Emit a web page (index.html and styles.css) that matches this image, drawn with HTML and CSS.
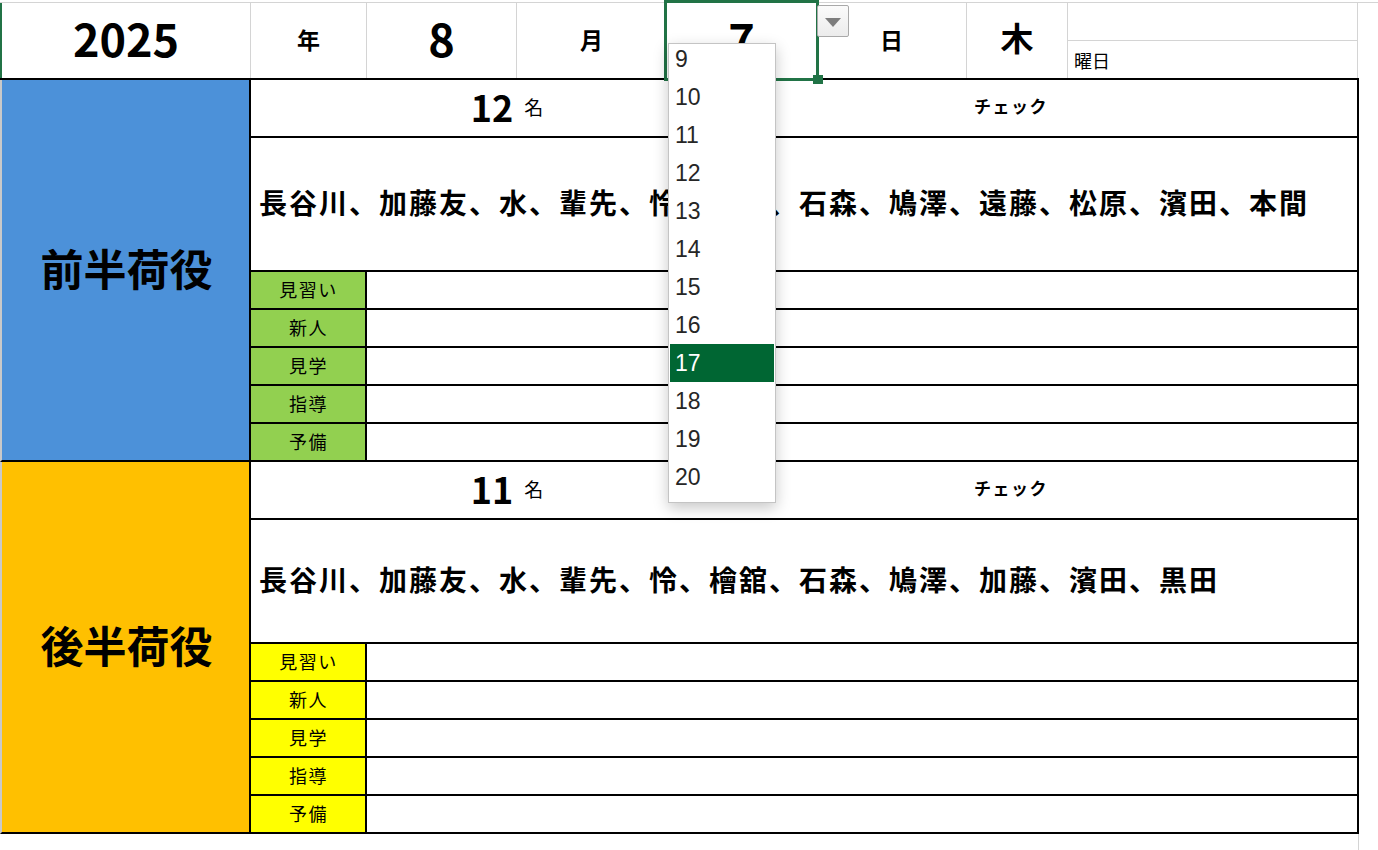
FILE: index.html
```html
<!DOCTYPE html>
<html lang="ja">
<head>
<meta charset="utf-8">
<title>荷役表</title>
<link rel="stylesheet" href="styles.css">
</head>
<body>
<div class="sheet">
  <div class="hdr">
    <div class="hc c-year big">2025</div>
    <div class="hc c-unit unit">年</div>
    <div class="hc c-num big">8</div>
    <div class="hc c-num unit">月</div>
    <div class="hc c-num big">7</div>
    <div class="hc c-num unit">日</div>
    <div class="hc c-dow">木</div>
    <div class="hc c-split">
      <div class="sp-top"></div>
      <div class="sp-bot">曜日</div>
    </div>
    <div class="hc c-rest"></div>
  </div>

  <div class="main">
    <div class="section">
      <div class="side blue">前半荷役</div>
      <div class="body">
        <div class="row count">
          <div class="cnt"><span class="n">12</span><span class="mei">名</span></div>
          <div class="chk">チェック</div>
        </div>
        <div class="row names n1">長谷川、加藤友、水、輩先、怜、檜舘、石森、鳩澤、遠藤、松原、濱田、本間</div>
        <div class="row sub"><div class="lab green">見習い</div><div class="val"></div></div>
        <div class="row sub"><div class="lab green">新人</div><div class="val"></div></div>
        <div class="row sub"><div class="lab green">見学</div><div class="val"></div></div>
        <div class="row sub"><div class="lab green">指導</div><div class="val"></div></div>
        <div class="row sub"><div class="lab green">予備</div><div class="val"></div></div>
      </div>
    </div>
    <div class="section">
      <div class="side orange">後半荷役</div>
      <div class="body">
        <div class="row count">
          <div class="cnt"><span class="n">11</span><span class="mei">名</span></div>
          <div class="chk">チェック</div>
        </div>
        <div class="row names n2">長谷川、加藤友、水、輩先、怜、檜舘、石森、鳩澤、加藤、濱田、黒田</div>
        <div class="row sub"><div class="lab yellow">見習い</div><div class="val"></div></div>
        <div class="row sub"><div class="lab yellow">新人</div><div class="val"></div></div>
        <div class="row sub"><div class="lab yellow">見学</div><div class="val"></div></div>
        <div class="row sub"><div class="lab yellow">指導</div><div class="val"></div></div>
        <div class="row sub"><div class="lab yellow">予備</div><div class="val"></div></div>
      </div>
    </div>
  </div>
  <div class="tail"></div>

  <div class="selection"><div class="handle"></div></div>
  <div class="dd-btn"><span class="tri"></span></div>
  <div class="dd-list">
    <div class="dd-inner">
      <div class="dd-item">9</div>
      <div class="dd-item">10</div>
      <div class="dd-item">11</div>
      <div class="dd-item">12</div>
      <div class="dd-item">13</div>
      <div class="dd-item">14</div>
      <div class="dd-item">15</div>
      <div class="dd-item">16</div>
      <div class="dd-item active">17</div>
      <div class="dd-item">18</div>
      <div class="dd-item">19</div>
      <div class="dd-item">20</div>
    </div>
  </div>
</div>
</body>
</html>
```
FILE: styles.css
```css
* { box-sizing: border-box; }
html, body { margin: 0; padding: 0; background: #fff; }
body {
  font-family: "Noto Sans CJK JP", "Noto Sans", sans-serif;
  color: #000;
}
.sheet {
  position: relative;
  width: 1378px;
  height: 850px;
  overflow: hidden;
}

/* header row */
.hdr {
  display: flex;
  margin-top: 2px;
  height: 76px;
  border-top: 1px solid #d4d4d4;
}
.hc {
  height: 75px;
  border-right: 1px solid #d4d4d4;
  display: flex;
  align-items: center;
  justify-content: center;
  flex: none;
}
.c-year { width: 251px; border-left: 2px solid #217346; }
.c-unit { width: 116px; }
.c-num { width: 150px; }
.c-dow { width: 101px; font-size: 33px; font-weight: 700; padding-bottom: 8px; }
.c-split {
  width: 290px;
  flex-direction: column;
  align-items: stretch;
  justify-content: flex-start;
}
.sp-top { height: 38px; border-bottom: 1px solid #d4d4d4; }
.sp-bot {
  flex: 1;
  font-size: 18px;
  display: flex;
  align-items: center;
  padding-left: 6px;
}
.c-rest { flex: 1; border-right: none; }
.big { font-size: 45px; font-weight: 700; padding-bottom: 7px; }
.unit { font-size: 23px; font-weight: 700; padding-bottom: 4px; }

/* main table */
.main {
  width: 1359px;
  border-top: 2px solid #000;
}
.section {
  display: grid;
  grid-template-columns: 251px 1108px;
}
.side {
  border-left: 2px solid #c9c9c9;
  border-right: 2px solid #000;
  border-bottom: 2px solid #000;
  display: flex;
  align-items: center;
  justify-content: center;
  font-size: 43px;
  font-weight: 700;
  padding-left: 2px;
  padding-bottom: 6px;
}
.blue { background: #4c91d9; }
.orange { background: #ffc000; }
.body { border-right: 2px solid #000; }
.row { border-bottom: 2px solid #000; display: flex; }
.count { height: 58px; align-items: center; padding-bottom: 5px; }
.cnt {
  width: 512px;
  display: flex;
  align-items: center;
  justify-content: center;
  gap: 11px;
}
.n { font-size: 36px; font-weight: 700; }
.mei { font-size: 19px; padding-top: 2px; }
.chk {
  width: 500px;
  text-align: center;
  font-size: 17px;
  font-weight: 700;
  letter-spacing: 1.5px;
  padding-right: 4px;
}
.names {
  align-items: center;
  padding-left: 8px;
  padding-bottom: 5px;
  font-size: 28px;
  font-weight: 700;
  letter-spacing: 2px;
  white-space: nowrap;
}
.n1 { height: 134px; }
.n2 { height: 124px; }
.sub { height: 38px; }
.lab {
  width: 116px;
  border-right: 2px solid #000;
  display: flex;
  align-items: center;
  justify-content: center;
  font-size: 18px;
  letter-spacing: 1.5px;
  padding-left: 1px;
  padding-bottom: 3px;
}
.green { background: #92d050; }
.yellow { background: #ffff00; }
.val { flex: 1; }
.tail {
  width: 1359px;
  height: 16px;
  border-right: 1px solid #d4d4d4;
}

/* overlays */
.selection {
  position: absolute;
  left: 664px;
  top: 0;
  width: 155px;
  height: 81px;
  border: 3px solid #217346;
}
.handle {
  position: absolute;
  right: -7px;
  bottom: -6px;
  width: 10px;
  height: 9px;
  background: #217346;
}
.dd-btn {
  position: absolute;
  left: 817px;
  top: 5px;
  width: 32px;
  height: 32px;
  border: 1px solid #a9a9a9;
  border-radius: 2px;
  background: linear-gradient(#fbfbfb, #ececec);
  display: flex;
  justify-content: center;
  padding-top: 12px;
}
.tri {
  width: 0;
  height: 0;
  border-left: 8px solid transparent;
  border-right: 8px solid transparent;
  border-top: 9px solid #7d7d7d;
}
.dd-list {
  position: absolute;
  left: 668px;
  top: 43px;
  width: 108px;
  height: 460px;
  background: #fff;
  border: 1px solid #c4c4c4;
  box-shadow: 0 5px 14px rgba(0, 0, 0, 0.22);
  overflow: hidden;
}
.dd-inner { margin-top: -4px; padding: 0 1px; }
.dd-item {
  height: 38px;
  line-height: 38px;
  font-family: "Liberation Sans", Arial, sans-serif;
  font-size: 23px;
  color: #262626;
  padding-left: 5px;
}
.dd-item.active { background: #006633; color: #fff; }
```
